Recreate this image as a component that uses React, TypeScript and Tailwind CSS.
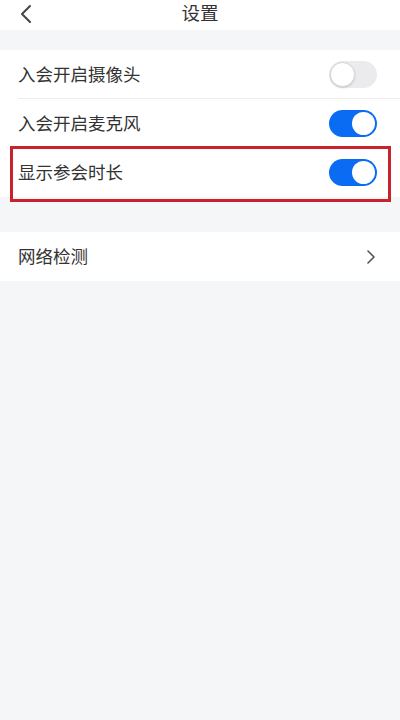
import React from "react"

const font = { fontFamily: '"Noto Sans CJK SC", "Noto Sans", sans-serif' }

/* ── Toggle switch ─────────────────────────────────────────────── */
function Toggle({ on }: { on: boolean }) {
  if (on) {
    return (
      <div className="flex h-[27px] w-[48px] items-center justify-end rounded-full bg-[#0a6cf2] p-[2px]">
        <div className="h-[23px] w-[23px] rounded-full bg-white" />
      </div>
    )
  }
  return (
    <div className="flex h-[27px] w-[48px] items-center rounded-full bg-[#ebebed] p-[1px]">
      <div className="h-[25px] w-[25px] rounded-full border border-[#d6d6d8] bg-white shadow-[0_1px_2px_rgba(0,0,0,0.15)]" />
    </div>
  )
}

function Row({ label, children, divider }: { label: string; children: React.ReactNode; divider?: boolean }) {
  return (
    <div className="relative flex h-[49px] items-center justify-between bg-white pl-[18px] pr-[23px]">
      <span className="text-[17.5px] text-[#333]">{label}</span>
      {children}
      {divider && <div className="absolute bottom-0 left-[18px] right-0 h-px bg-[#ececee]" />}
    </div>
  )
}

export default function App() {
  return (
    <div className="min-h-[720px] w-[400px] bg-[#f5f6f8]" style={font}>
      {/* header */}
      <div className="relative flex h-[30px] items-center justify-center bg-white">
        <svg className="absolute left-[19px] top-[4px]" width="14" height="20" viewBox="0 0 14 20" fill="none">
          <path d="M11 2 L3 10 L11 18" stroke="#444" strokeWidth="2" strokeLinecap="round" strokeLinejoin="round" />
        </svg>
        <span className="-mt-[5px] text-[18.5px] text-[#333]">设置</span>
      </div>

      <div className="h-[20px]" />

      <Row label="入会开启摄像头" divider>
        <Toggle on={false} />
      </Row>
      <Row label="入会开启麦克风">
        <Toggle on />
      </Row>
      <div className="relative">
        <Row label="显示参会时长">
          <Toggle on />
        </Row>
        <div className="pointer-events-none absolute left-[10px] right-[9px] top-[-2px] h-[56px] border-[3px] border-[#c8232c]" />
      </div>

      <div className="h-[35px]" />

      <Row label="网络检测">
        <svg width="10" height="16" viewBox="0 0 10 16" fill="none" className="mr-[1px]">
          <path d="M2 2 L8 8 L2 14" stroke="#555" strokeWidth="1.6" strokeLinecap="round" strokeLinejoin="round" />
        </svg>
      </Row>
    </div>
  )
}
